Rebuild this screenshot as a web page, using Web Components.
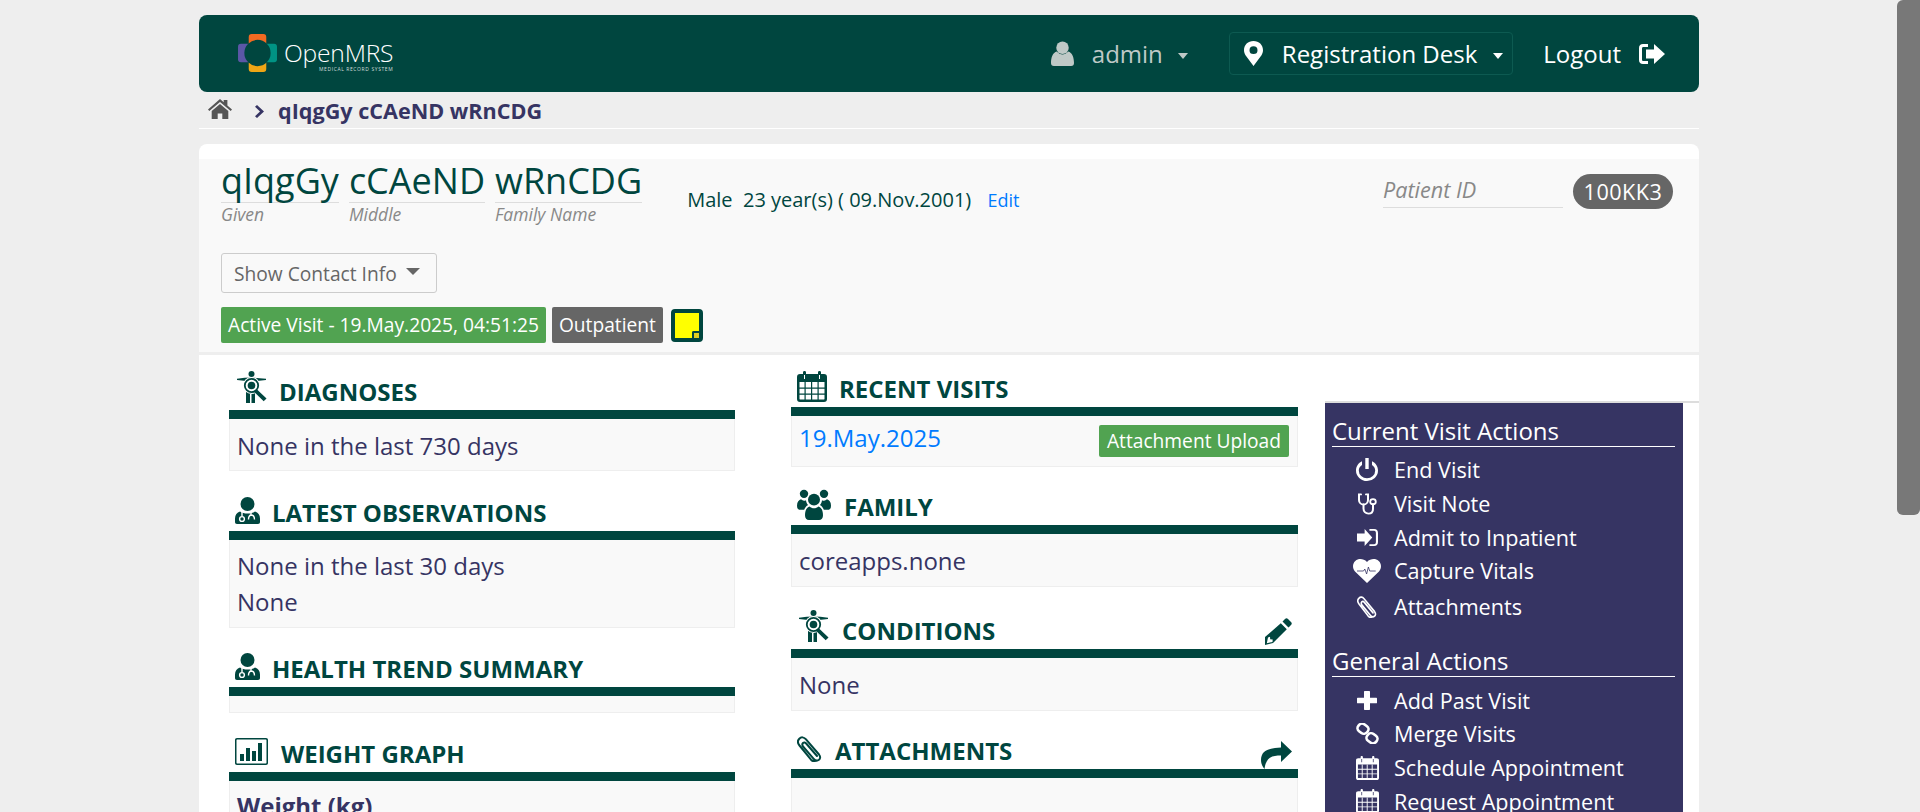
<!DOCTYPE html>
<html>
<head>
<meta charset="utf-8">
<title>OpenMRS</title>
<style>
html, body { margin: 0; height: 812px; overflow: hidden; background: #eeeeee; }
body { font-family: "Open Sans", sans-serif; color: #363463; }
</style>
</head>
<body>
<app-scrollbar></app-scrollbar>
<app-page>
  <omrs-header></omrs-header>
  <omrs-breadcrumb name="qIqgGy cCAeND wRnCDG"></omrs-breadcrumb>
  <patient-card>
    <patient-header></patient-header>
    <dash-column slot="left" style="--top:17px">
      <dash-section heading="DIAGNOSES" icon="body" iw="30" ih="32" style="--ix:8px;--gap:12px">
        <p>None in the last 730 days</p>
      </dash-section>
      <dash-section heading="LATEST OBSERVATIONS" icon="doctor" iw="25" ih="27" style="--ix:6px;--gap:12px;--mt:22px">
        <p class="first">None in the last 30 days</p><p class="next">None</p>
      </dash-section>
      <dash-section heading="HEALTH TREND SUMMARY" icon="doctor" iw="25" ih="27" style="--ix:6px;--gap:12px;--mt:21px;--bh:16px"></dash-section>
      <dash-section heading="WEIGHT GRAPH" icon="chart" iw="33" ih="27" style="--ix:6px;--gap:13px;--mt:21px;--bh:200px">
        <p class="strong">Weight (kg)</p>
      </dash-section>
    </dash-column>
    <dash-column slot="middle" style="--top:14px">
      <dash-section heading="RECENT VISITS" icon="calendar" iw="30" ih="31" style="--ix:6px;--gap:12px;--ib:-2px">
        <visit-row date="19.May.2025" action="Attachment Upload"></visit-row>
      </dash-section>
      <dash-section heading="FAMILY" icon="users" iw="34" ih="31" style="--ix:6px;--gap:13px;--mt:20px;--ib:-2px;--bh:52px">
        <p>coreapps.none</p>
      </dash-section>
      <dash-section heading="CONDITIONS" icon="body" iw="30" ih="32" action="pencil" style="--ix:8px;--gap:13px;--mt:24px;--bh:52px">
        <p>None</p>
      </dash-section>
      <dash-section heading="ATTACHMENTS" icon="clip" iw="25" ih="26" action="share" style="--ix:6px;--gap:13px;--mt:20px;--bh:200px"></dash-section>
    </dash-column>
    <action-panel slot="right">
      <action-group heading="Current Visit Actions">
        <action-item icon="power" label="End Visit"></action-item>
        <action-item icon="stethoscope" label="Visit Note"></action-item>
        <action-item icon="signin" label="Admit to Inpatient"></action-item>
        <action-item icon="heart" label="Capture Vitals"></action-item>
        <action-item icon="clip" label="Attachments" style="margin-top:2px"></action-item>
      </action-group>
      <action-group heading="General Actions" style="--mt:21px">
        <action-item icon="plus" label="Add Past Visit"></action-item>
        <action-item icon="link" label="Merge Visits"></action-item>
        <action-item icon="calendar" label="Schedule Appointment"></action-item>
        <action-item icon="calendar" label="Request Appointment"></action-item>
      </action-group>
    </action-panel>
  </patient-card>
</app-page>

<script>
// icons are hand drawn
const ICONS = {
  user: { vb: '0 0 24 26', d: '<circle cx="12" cy="7" r="6.5"/><path d="M3 26c-2 0-3-1-3-3 0-6 2-11 6-12 2 2 4 3 6 3s4-1 6-3c4 1 6 6 6 12 0 2-1 3-3 3z"/>' },
  pin: { vb: '0 0 19 26', d: '<path fill-rule="evenodd" d="M9.500 0C4 0 0 4 0 9.500c0 2 .6 3.500 1.500 5.300L9.500 26l8-11.200c.9-1.800 1.500-3.300 1.500-5.300C19 4 15 0 9.500 0zm0 13.500a4 4 0 1 1 0-8 4 4 0 0 1 0 8z"/>' },
  logout: { vb: '0 0 26 20', d: '<path d="M9 0v3H4.500C3.500 3 3 3.500 3 4.500v11c0 1 .5 1.500 1.500 1.500H9v3H4c-2.500 0-4-1.500-4-4V4c0-2.500 1.500-4 4-4z"/><path d="M15 0l11 10-11 10v-5.500H7v-9h8z"/>' },
  home: { vb: '0 0 26 22', d: '<path d="M13 0l4 3.600V1h4v6.200L26 11.600 24.600 13.200 13 3.200 1.400 13.200 0 11.600z"/><path d="M13 5.500l9 7.800V22h-6.500v-6h-5v6H4v-8.700z"/>' },
  chevron: { vb: '0 0 9 14', d: '<path d="M2 0l7 7-7 7-2-2 5-5-5-5z"/>' },
  body: { vb: '0 0 30 32', d: '<circle cx="14.500" cy="3" r="3"/><path d="M0 7.800Q8 6.600 14.500 6.600T29 7.800V9L20 10H9L0 9z"/><path d="M9 10h11v12h-2v10h-3.500v-9h-1.500v9H9z"/><circle cx="14.500" cy="14.500" r="8.500" fill="#fff"/><circle cx="14.500" cy="14.500" r="6.700" fill="none" stroke="currentColor" stroke-width="1.800"/><circle cx="14.500" cy="14.500" r="3.800"/><path d="M19.500 18l10 9.500-2.800 2.800-10-9.800z"/>' },
  doctor: { vb: '0 0 25 27', d: '<circle cx="12.500" cy="7" r="7"/><path d="M5 14.500c2 1.500 4.500 2 7.500 2s5.500-.5 7.500-2c3 .8 5 3.500 5 7V25c0 1.300-.7 2-2 2H2c-1.300 0-2-.7-2-2v-3.500c0-3.500 2-6.200 5-7z"/><g fill="none" stroke="#fff" stroke-width="1.400"><path d="M7 15v4"/><circle cx="7" cy="22" r="2.400"/><path d="M16 15.500v2.500c-2 .5-2.500 2-2.500 4.500M16 18c2.500 0 3.500 2 3.500 4.500"/></g>' },
  chart: { vb: '0 0 33 27', d: '<path fill-rule="evenodd" d="M2 0h29c1.300 0 2 .7 2 2v23c0 1.300-.7 2-2 2H2c-1.300 0-2-.7-2-2V2C0 .7.700 0 2 0zm.5 1.500c-.7 0-1 .3-1 1v22c0 .7.300 1 1 1h28c.7 0 1-.3 1-1v-22c0-.7-.3-1-1-1z"/><path d="M5 16h4v7H5zM11 10h4v13h-4zM17 13h4v10h-4zM23 5h4v18h-4z"/>' },
  calendar: { vb: '0 0 30 31', d: '<path fill-rule="evenodd" d="M3 3h3V1.500C6 .5 6.500 0 7.500 0S9 .5 9 1.500V3h12V1.500C21 .5 21.500 0 22.500 0S24 .5 24 1.500V3h3c2 0 3 1 3 3v22c0 2-1 3-3 3H3c-2 0-3-1-3-3V6c0-2 1-3 3-3zM2.500 11v17c0 .3.200.5.500.5h24c.3 0 .5-.2.500-.5V11zM7 4v4h1V4zm15 0v4h1V4z"/><path d="M2 16.500h26v1.200H2zM2 22.500h26v1.200H2zM7.500 11h1.200v18H7.500zM14 11h1.200v18H14zM20.500 11h1.200v18h-1.200z"/>' },
  users: { vb: '0 0 34 32', d: '<circle cx="7" cy="5" r="4.200"/><circle cx="27" cy="5" r="4.200"/><circle cx="17" cy="11" r="6"/><path d="M0 17c0-4 2-6 4-6.500 1 1 2 1.500 3 1.500.7 0 1.300-.1 2-.5.2 2 1 4 2.200 5-2 1-3.200 2.500-4 5H3c-2 0-3-1.500-3-4.500zM34 17c0-4-2-6-4-6.500-1 1-2 1.500-3 1.500-.7 0-1.300-.1-2-.5-.2 2-1 4-2.200 5 2 1 3.200 2.500 4 5H31c2 0 3-1.500 3-4.500z"/><path d="M8 27c0-5 2-8.500 4.500-9 1.300 1.200 2.800 1.800 4.500 1.800s3.200-.6 4.500-1.800c2.500.5 4.500 4 4.500 9 0 3-1.500 5-4 5H12c-2.500 0-4-2-4-5z"/>' },
  pencil: { vb: '0 0 27 27', d: '<path fill-rule="evenodd" d="M20 1c1-1 2-1 3 0l3 3c1 1 1 2 0 3l-2.500 2.500-6-6zM15.800 5.200l6 6L8 25l-8 2 0-8zM3 19.500L1.800 25.200 7.500 24l.2-2.500-2.500-.2-.2-2.500z"/>' },
  share: { vb: '0 0 31 28', d: '<path d="M20 0l11 10.500L20 21v-6.500c-9 0-15 1.500-16.500 13.500C1 25 0 22 0 19 0 10 7 7 20 6.500z"/>' },
  clip: { vb: '0 0 25 26', d: '<path fill="none" stroke="currentColor" stroke-width="2" stroke-linecap="round" d="M19 24.500c-1.500 1-3.500.8-5-.8L2.500 9.500C.5 7 .5 4.500 2.300 2.700c2-2 4.500-1.700 6.500.5L22 18.500c1.800 2.300 1.300 4.500-.3 5.500-1.500 1-3.500.5-5-1.200L6 10.500C5 9 5 8 6 7s2.200-.7 3.200.5L20 20"/>' },
  power: { vb: '0 0 22 24', d: '<path d="M9.300 0h3.400v11.500H9.300z"/><path d="M6 3.500v3.700C3.800 8.700 2.800 10.800 2.800 13a8.200 8.200 0 0 0 16.400 0c0-2.200-1-4.300-3.200-5.800V3.500c3.600 1.800 6 5.300 6 9.500a11 11 0 0 1-22 0c0-4.200 2.400-7.700 6-9.500z"/>' },
  stethoscope: { vb: '0 0 20 24', d: '<g fill="none" stroke="currentColor" stroke-width="2" stroke-linecap="round"><path d="M4 1.500H2v6c0 3 2 5 4.500 5s4.500-2 4.500-5v-6H9"/><path d="M6.500 12.500V17c0 3 2 5.500 5 5.500 3 0 4.500-2 4.500-5V12"/></g><circle cx="16" cy="9.500" r="2.800" fill="none" stroke="currentColor" stroke-width="1.800"/>' },
  signin: { vb: '0 0 22 17', d: '<path d="M8 0l8 8.500L8 17v-4.500H0v-8h8z"/><path d="M13 0h5c2.500 0 4 1.500 4 4v9c0 2.500-1.500 4-4 4h-5v-1.800h5c1 0 1.800-.8 1.800-2V3.800c0-1.200-.8-2-1.800-2h-5z"/>' },
  heart: { vb: '0 0 28 24', d: '<path d="M14 24L2 12.500C-.7 9.800-.7 4.500 2.300 2 5.500-.8 10.500-.5 14 3c3.500-3.500 8.500-3.800 11.700-1 3 2.500 3 7.800.3 10.500z"/><path fill="none" stroke="#363463" stroke-width=".8" d="M4 12h6.500l1.300-2 1.800 5 1.800-7 1.300 4h6"/>' },
  plus: { vb: '0 0 20 20', d: '<path d="M7 1c0-.7.300-1 1-1h4c.7 0 1 .3 1 1v6h6c.7 0 1 .3 1 1v4c0 .7-.3 1-1 1h-6v6c0 .7-.3 1-1 1H8c-.7 0-1-.3-1-1v-6H1c-.7 0-1-.3-1-1V8c0-.7.300-1 1-1h6z"/>' },
  link: { vb: '0 0 23 22', d: '<g fill="none" stroke="currentColor" stroke-width="2.600"><rect x="1.500" y="1.500" width="11" height="9" rx="4" transform="rotate(38 7 6)"/><rect x="10.500" y="11.500" width="11" height="9" rx="4" transform="rotate(38 16 16)"/></g>' }
};

class OmrsIcon extends HTMLElement {
  connectedCallback() {
    const ic = ICONS[this.getAttribute('name')];
    const w = this.getAttribute('w'), h = this.getAttribute('h');
    this.attachShadow({ mode: 'open' }).innerHTML = `
      <style>:host{display:inline-flex;flex:none;width:${w}px;height:${h}px} svg{width:100%;height:100%;display:block;fill:currentColor}</style>
      <svg viewBox="${ic.vb}" preserveAspectRatio="none">${ic.d}</svg>`;
  }
}
customElements.define('omrs-icon', OmrsIcon);

class AppScrollbar extends HTMLElement {
  constructor() {
    super();
    this.attachShadow({ mode: 'open' }).innerHTML = `
      <style>:host{position:fixed;top:0;right:0;width:23px;height:515px;background:#787878;border-radius:6px 0 6px 6px;z-index:5}</style>`;
  }
}
customElements.define('app-scrollbar', AppScrollbar);

class AppPage extends HTMLElement {
  constructor() {
    super();
    this.attachShadow({ mode: 'open' }).innerHTML = `
      <style>:host{display:block;width:1500px;margin-left:199px;padding-top:15px}</style><slot></slot>`;
  }
}
customElements.define('app-page', AppPage);

class OmrsHeader extends HTMLElement {
  constructor() {
    super();
    this.attachShadow({ mode: 'open' }).innerHTML = `
      <style>
        :host{display:flex;align-items:center;height:77px;background:#00463f;border-radius:8px;color:#fff;font-size:24px;padding-left:39px;padding-right:34px;box-sizing:border-box}
        .logo{display:flex;align-items:flex-start;gap:7px;height:38px;margin-top:-2px}
        .logo svg{width:39px;height:38px;flex:none}
        .brand{display:flex;flex-direction:column;align-items:flex-end;font-weight:300;font-size:24.600px;line-height:26px;letter-spacing:-.2px;margin-top:6px}
        .brand small{font-size:5px;line-height:6px;letter-spacing:.6px;font-weight:400;color:#cfdcda}
        .right{margin-left:auto;display:flex;align-items:center}
        .user{display:flex;align-items:center;color:#bfc9c7;gap:18px}
        .caret{width:0;height:0;border:5.500px solid transparent;border-top:6px solid currentColor;border-bottom:0;margin-left:16px;margin-top:4px}
        .loc{display:flex;align-items:center;height:43px;box-sizing:border-box;border:1px solid #0d5a51;border-radius:4px;padding:0 9px 0 14px;margin-left:41px}
        .loc span{margin-left:19px}
        .out{display:flex;align-items:center;gap:18px;margin-left:30px}
      </style>
      <div class="logo">
        <svg viewBox="0 0 40 39">
          <rect x="11" y="0" width="18" height="14" rx="3" fill="#f26a21"/>
          <rect x="27" y="10" width="13" height="19" rx="3" fill="#009384"/>
          <rect x="11" y="25" width="18" height="14" rx="3" fill="#eea616"/>
          <rect x="0" y="10" width="13" height="19" rx="3" fill="#5b57a6"/>
          <circle cx="20" cy="19.500" r="13.500" fill="#00463f"/>
        </svg>
        <div class="brand">OpenMRS<small>MEDICAL RECORD SYSTEM</small></div>
      </div>
      <div class="right">
        <div class="user"><omrs-icon name="user" w="23" h="25"></omrs-icon><span>admin</span><i class="caret" style="margin-left:-3px"></i></div>
        <div class="loc"><omrs-icon name="pin" w="19" h="25"></omrs-icon><span>Registration Desk</span><i class="caret"></i></div>
        <div class="out"><span>Logout</span><omrs-icon name="logout" w="26" h="20"></omrs-icon></div>
      </div>`;
  }
}
customElements.define('omrs-header', OmrsHeader);

class OmrsBreadcrumb extends HTMLElement {
  connectedCallback() {
    this.attachShadow({ mode: 'open' }).innerHTML = `
      <style>
        :host{display:flex;align-items:center;height:36px;border-bottom:1px solid #fff;color:#363463;font-weight:700;font-size:21.600px;margin-bottom:15px}
        span{margin-top:1px;margin-left:-1px}
        omrs-icon[name=home]{color:#555;margin-left:9px;margin-top:-2px}
        omrs-icon[name=chevron]{margin-left:23px;margin-right:15px;margin-top:2px}
      </style>
      <omrs-icon name="home" w="24" h="20"></omrs-icon>
      <omrs-icon name="chevron" w="9" h="13"></omrs-icon>
      <span>${this.getAttribute('name')}</span>`;
  }
}
customElements.define('omrs-breadcrumb', OmrsBreadcrumb);

class PatientCard extends HTMLElement {
  constructor() {
    super();
    this.attachShadow({ mode: 'open' }).innerHTML = `
      <style>
        :host{display:block;background:#fff;border-radius:8px 8px 0 0;padding-top:15px}
        .cols{display:flex;align-items:flex-start}
        ::slotted([slot=left]){margin-left:30px;width:506px}
        ::slotted([slot=middle]){margin-left:56px;width:507px}
        ::slotted([slot=right]){margin-left:27px}
      </style>
      <slot></slot>
      <div class="cols"><slot name="left"></slot><slot name="middle"></slot><slot name="right"></slot></div>`;
  }
}
customElements.define('patient-card', PatientCard);

class PatientHeader extends HTMLElement {
  constructor() {
    super();
    const part = (n, l) => `<div class="part"><div class="val">${n}</div><em>${l}</em></div>`;
    this.attachShadow({ mode: 'open' }).innerHTML = `
      <style>
        :host{display:block;height:193px;background:#f9f9f9;border-bottom:3px solid #eee;padding-left:22px;padding-right:26px;color:#00463f}
        .top{display:flex;align-items:flex-start;height:94px}
        .names{display:flex;gap:10px}
        .val{font-size:36px;line-height:43px;border-bottom:1px solid #ddd;white-space:nowrap}
        em{display:block;font-size:17.500px;line-height:22px;color:#888;font-weight:400}
        .demo{margin-left:45px;margin-top:28px;font-size:20px;line-height:26px;white-space:pre}
        .demo a{color:#007bff;font-size:18px;margin-left:11px}
        .pid{margin-left:auto;display:flex;align-items:flex-start;margin-top:15px}
        .pid em{width:180px;font-size:21.600px;line-height:32px;height:33px;border-bottom:1px solid #ddd}
        .pid b{margin-left:10px;width:100px;height:35px;border-radius:18px;background:#666;color:#fff;font-weight:400;font-size:21.600px;line-height:35px;text-align:center;letter-spacing:.5px}
        .contact{display:inline-flex;align-items:center;height:40px;width:216px;box-sizing:border-box;border:1px solid #ccc;border-radius:3px;padding-left:12px;color:#666;font-size:19.200px;white-space:nowrap}
        .contact i{width:0;height:0;border:7px solid transparent;border-top:7px solid #666;border-bottom:0;margin-left:9px;margin-top:-4px}
        .tags{display:flex;align-items:center;gap:6px;margin-top:14px}
        .tag{height:36px;line-height:36px;color:#fff;font-size:19.200px;padding:0 7px;border-radius:2px;white-space:nowrap}
        .g{background:#51a351}.o{background:#666}
        .note{width:32px;height:33px;box-sizing:border-box;border:4px solid #00463f;border-radius:4px;background:#ff0;margin-left:2px;position:relative}
        .note::after{content:"";position:absolute;right:0;bottom:0;width:5px;height:5px;background:#e0d020;border-left:2px solid #00463f;border-top:2px solid #00463f;border-top-left-radius:2px}
      </style>
      <div class="top">
        <div class="names">${part('qIqgGy', 'Given')}${part('cCAeND', 'Middle')}${part('wRnCDG', 'Family Name')}</div>
        <div class="demo">Male  23 year(s) ( 09.Nov.2001) <a>Edit</a></div>
        <div class="pid"><em>Patient ID</em><b>100KK3</b></div>
      </div>
      <div class="contact">Show Contact Info<i></i></div>
      <div class="tags"><span class="tag g">Active Visit - 19.May.2025, 04:51:25</span><span class="tag o">Outpatient</span><span class="note"></span></div>`;
  }
}
customElements.define('patient-header', PatientHeader);

class DashColumn extends HTMLElement {
  constructor() {
    super();
    this.attachShadow({ mode: 'open' }).innerHTML = `
      <style>:host{display:block;padding-top:var(--top,0)}</style><slot></slot>`;
  }
}
customElements.define('dash-column', DashColumn);

class DashSection extends HTMLElement {
  connectedCallback() {
    const action = this.getAttribute('action');
    const acts = { pencil: [27, 27], share: [31, 28] };
    this.attachShadow({ mode: 'open' }).innerHTML = `
      <style>
        :host{display:block;margin-top:var(--mt,0)}
        .head{display:flex;align-items:flex-end;height:47px;box-sizing:border-box;border-bottom:9px solid #00463f;color:#00463f;padding-bottom:7px;position:relative}
        .head omrs-icon:first-child{margin-left:var(--ix,6px);margin-bottom:var(--ib,0)}
        h3{margin:0 0 -4px var(--gap,13px);font-size:24px;line-height:30px;font-weight:700;white-space:nowrap}
        .act{position:absolute;right:6px}
        .act.pencil{bottom:4px}
        .act.share{bottom:0}
        .body{background:#f9f9f9;border:1px solid #eee;border-top:0;min-height:var(--bh,0);padding:0 7px;color:#363463;font-size:24px;line-height:36px}
        ::slotted(p){margin:0;padding:9px 0 6px}
        ::slotted(p.first){padding:8px 0 0}
        ::slotted(p.next){padding:0 0 7px}
        ::slotted(p.strong){font-weight:700;padding:7px 0 0}
      </style>
      <div class="head">
        <omrs-icon name="${this.getAttribute('icon')}" w="${this.getAttribute('iw')}" h="${this.getAttribute('ih')}"></omrs-icon>
        <h3>${this.getAttribute('heading')}</h3>
        ${action ? `<omrs-icon class="act ${action}" name="${action}" w="${acts[action][0]}" h="${acts[action][1]}"></omrs-icon>` : ''}
      </div>
      <div class="body"><slot></slot></div>`;
  }
}
customElements.define('dash-section', DashSection);

class VisitRow extends HTMLElement {
  connectedCallback() {
    this.attachShadow({ mode: 'open' }).innerHTML = `
      <style>
        :host{display:flex;justify-content:space-between;align-items:flex-start;height:50px}
        a{color:#007bff;font-size:24px;line-height:30px;padding-top:7px}
        b{font-weight:400;background:#51a351;color:#fff;font-size:19.200px;line-height:32px;height:32px;padding:0 8px;border-radius:2px;margin-top:9px;margin-right:1px;white-space:nowrap}
      </style>
      <a>${this.getAttribute('date')}</a><b>${this.getAttribute('action')}</b>`;
  }
}
customElements.define('visit-row', VisitRow);

class ActionPanel extends HTMLElement {
  constructor() {
    super();
    this.attachShadow({ mode: 'open' }).innerHTML = `
      <style>
        :host{display:block;width:374px;margin-top:46px;border-top:2px solid #ddd;box-sizing:border-box}
        .inner{width:358px;height:600px;background:#363463;color:#fff;box-sizing:border-box;padding:11px 8px 0 7px}
      </style>
      <div class="inner"><slot></slot></div>`;
  }
}
customElements.define('action-panel', ActionPanel);

class ActionGroup extends HTMLElement {
  connectedCallback() {
    this.attachShadow({ mode: 'open' }).innerHTML = `
      <style>
        :host{display:block;margin-top:var(--mt,0)}
        h4{margin:0 0 6px;font-weight:400;font-size:24px;line-height:34px;height:32px;border-bottom:1px solid #fff}
      </style>
      <h4>${this.getAttribute('heading')}</h4><slot></slot>`;
  }
}
customElements.define('action-group', ActionGroup);

class ActionItem extends HTMLElement {
  connectedCallback() {
    const sizes = { power: [22, 23], stethoscope: [20, 22], signin: [21, 17], heart: [28, 24], clip: [20, 22], plus: [20, 19], link: [23, 21], calendar: [23, 24] };
    const s = sizes[this.getAttribute('icon')];
    this.attachShadow({ mode: 'open' }).innerHTML = `
      <style>
        :host{display:flex;align-items:center;height:33.700px;font-size:21.600px;color:#fff;white-space:nowrap}
        .ic{width:62px;display:flex;justify-content:center;padding-left:8px;box-sizing:border-box;flex:none}
      </style>
      <div class="ic"><omrs-icon name="${this.getAttribute('icon')}" w="${s[0]}" h="${s[1]}"></omrs-icon></div>
      <span>${this.getAttribute('label')}</span>`;
  }
}
customElements.define('action-item', ActionItem);
</script>
</body>
</html>
